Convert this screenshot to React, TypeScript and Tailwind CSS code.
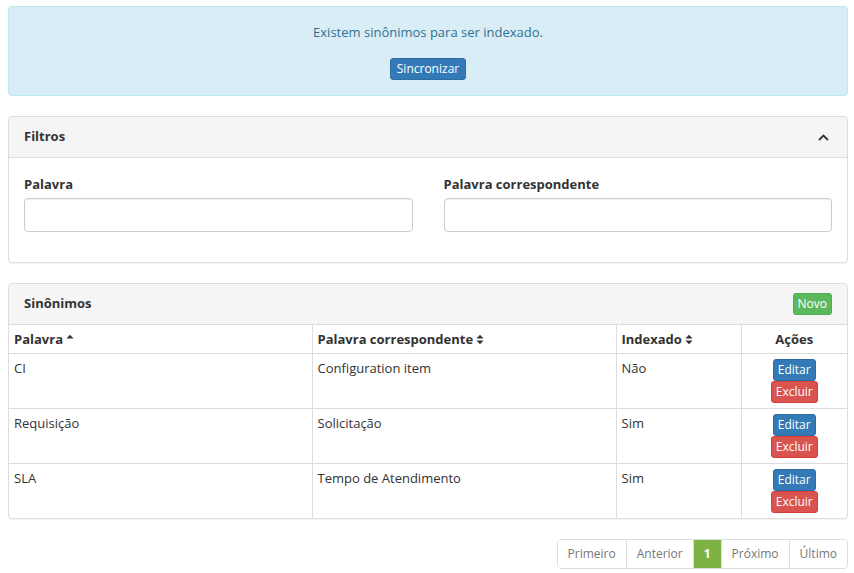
import React from 'react';

const SortBoth = () => (
  <svg width="8" height="11" viewBox="0 0 8 11" className="inline-block ml-[3px] -mt-[2px]">
    <path d="M0.5 4.5 L4 0.8 L7.5 4.5 Z" fill="#333" />
    <path d="M0.5 6.5 L4 10.2 L7.5 6.5 Z" fill="#333" />
  </svg>
);

const SortAsc = () => (
  <svg width="8" height="11" viewBox="0 0 8 11" className="inline-block ml-[3px] -mt-[2px]">
    <path d="M0.5 4.5 L4 0.8 L7.5 4.5 Z" fill="#333" />
  </svg>
);

const rows = [
  { palavra: 'CI', corresp: 'Configuration item', indexado: 'Não' },
  { palavra: 'Requisição', corresp: 'Solicitação', indexado: 'Sim' },
  { palavra: 'SLA', corresp: 'Tempo de Atendimento', indexado: 'Sim' },
];

const pages = ['Primeiro', 'Anterior', '1', 'Próximo', 'Último'];

export default function App() {
  return (
    <div className="min-h-[573px] bg-white pl-2 pr-[6px] pt-[6px] text-[13px] text-[#333]" style={{ fontFamily: '"Open Sans", "Liberation Sans", sans-serif' }}>
      {/* Alert */}
      <div className="h-[90px] rounded border border-[#bce8f1] bg-[#d9edf7] text-center text-[#31708f] pt-[15px]">
        <p className="leading-[20px]">Existem sinônimos para ser indexado.</p>
        <button className="mt-[16px] h-[22px] rounded-[3px] bg-[#337ab7] px-[6px] text-[12px] leading-[20px] text-white border border-[#2e6da4]">
          Sincronizar
        </button>
      </div>

      {/* Filtros */}
      <div className="mt-[20px] rounded border border-[#ddd] shadow-[0_1px_1px_rgba(0,0,0,0.05)]">
        <div className="flex h-[41px] items-center justify-between border-b border-[#ddd] bg-[#f5f5f5] pl-[15px] pr-[18px] rounded-t">
          <span className="font-bold">Filtros</span>
          <svg width="11" height="7" viewBox="0 0 11 7">
            <path d="M1 6 L5.5 1.5 L10 6" fill="none" stroke="#333" strokeWidth="1.8" />
          </svg>
        </div>
        <div className="grid grid-cols-2 gap-[31px] px-[15px] pt-[17px] pb-[30px]">
          <div>
            <label className="block font-bold leading-[18px] mb-[5px]">Palavra</label>
            <input className="block h-[34px] w-full rounded border border-[#ccc] bg-white shadow-[inset_0_1px_1px_rgba(0,0,0,0.075)] outline-none" />
          </div>
          <div>
            <label className="block font-bold leading-[18px] mb-[5px]">Palavra correspondente</label>
            <input className="block h-[34px] w-full rounded border border-[#ccc] bg-white shadow-[inset_0_1px_1px_rgba(0,0,0,0.075)] outline-none" />
          </div>
        </div>
      </div>

      {/* Sinônimos */}
      <div className="mt-[20px] rounded border border-[#ddd] shadow-[0_1px_1px_rgba(0,0,0,0.05)] overflow-hidden">
        <div className="flex h-[41px] items-center justify-between border-b border-[#ddd] bg-[#f5f5f5] pl-[15px] pr-[15px]">
          <span className="font-bold">Sinônimos</span>
          <button className="h-[22px] rounded-[3px] border border-[#4cae4c] bg-[#5cb85c] px-[4px] text-[12px] leading-[20px] text-white">
            Novo
          </button>
        </div>
        <table className="w-full border-collapse">
          <thead>
            <tr>
              <th className="w-[303px] h-[28px] border-r border-b border-[#ddd] px-[5px] py-0 text-left font-bold leading-[18px]">
                Palavra<SortAsc />
              </th>
              <th className="w-[304px] h-[28px] border-r border-b border-[#ddd] px-[5px] py-0 text-left font-bold leading-[18px]">
                Palavra correspondente<SortBoth />
              </th>
              <th className="w-[125px] h-[28px] border-r border-b border-[#ddd] px-[5px] py-0 text-left font-bold leading-[18px]">
                Indexado<SortBoth />
              </th>
              <th className="h-[28px] border-b border-[#ddd] px-[5px] py-0 text-center font-bold leading-[18px]">Ações</th>
            </tr>
          </thead>
          <tbody>
            {rows.map((r, i) => (
              <tr key={r.palavra} className="h-[55px]">
                <td className={`border-r border-[#ddd] px-[5px] pt-[5px] align-top leading-[18px] ${i < rows.length - 1 ? 'border-b' : ''}`}>{r.palavra}</td>
                <td className={`border-r border-[#ddd] px-[5px] pt-[5px] align-top leading-[18px] ${i < rows.length - 1 ? 'border-b' : ''}`}>{r.corresp}</td>
                <td className={`border-r border-[#ddd] px-[5px] pt-[5px] align-top leading-[18px] ${i < rows.length - 1 ? 'border-b' : ''}`}>{r.indexado}</td>
                <td className={`border-[#ddd] px-[5px] pt-[5px] align-top ${i < rows.length - 1 ? 'border-b' : ''}`}>
                  <div className="flex flex-col items-center">
                    <button className="h-[22px] rounded-[3px] border border-[#2e6da4] bg-[#337ab7] px-[4px] text-[12px] leading-[20px] text-white">
                      Editar
                    </button>
                    <button className="h-[22px] rounded-[3px] border border-[#d43f3a] bg-[#d9534f] px-[4px] text-[12px] leading-[20px] text-white">
                      Excluir
                    </button>
                  </div>
                </td>
              </tr>
            ))}
          </tbody>
        </table>
      </div>

      {/* Pagination */}
      <div className="mt-[20px] flex justify-end">
        <div className="flex h-[30px] rounded border border-[#ddd] overflow-hidden">
          {pages.map((p, i) => (
            <span
              key={p}
              className={`flex items-center px-[10px] text-[12px] ${i > 0 ? 'border-l border-[#ddd]' : ''} ${
                p === '1' ? 'bg-[#7cb342] text-white font-bold' : 'bg-white text-[#777]'
              }`}
            >
              {p}
            </span>
          ))}
        </div>
      </div>
    </div>
  );
}
